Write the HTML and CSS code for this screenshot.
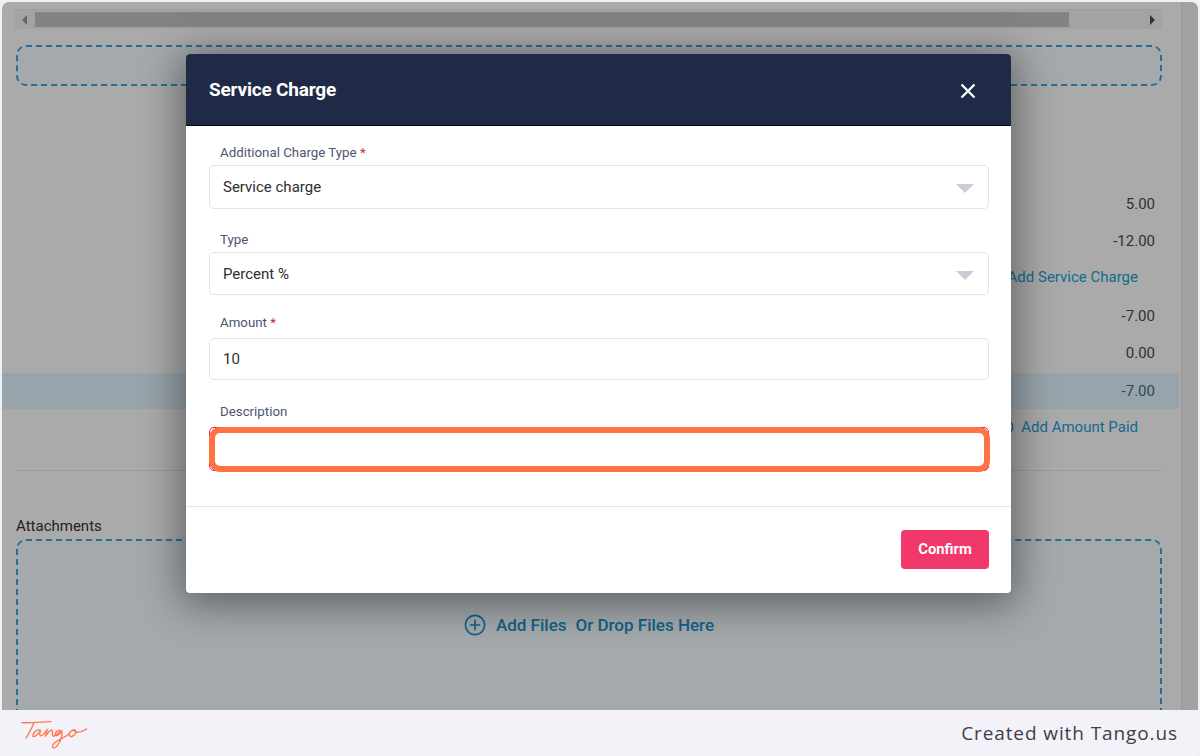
FILE: index.html
```html
<!DOCTYPE html>
<html lang="en">
<head>
<meta charset="utf-8">
<title>Service Charge</title>
<link rel="stylesheet" href="styles.css">
</head>
<body>
<div class="screen">
  <div class="stage">
    <main class="page">
      <div class="scrollbar">
        <span class="arrow arrow-left"></span>
        <span class="thumb"></span>
        <span class="arrow arrow-right"></span>
      </div>
      <div class="drop drop-top"></div>
      <div class="rows">
        <div class="row">5.00</div>
        <div class="row">-12.00</div>
        <div class="row link link-up">Add Service Charge</div>
        <div class="row row-down">-7.00</div>
        <div class="row row-down row-tail">0.00</div>
        <div class="row band">-7.00</div>
        <div class="row link link-up">
          <svg class="small-plus" viewBox="0 0 16 16"><circle cx="8" cy="8" r="6.8"/></svg>
          Add Amount Paid
        </div>
      </div>
      <hr class="rule">
      <div class="attach-label">Attachments</div>
      <div class="drop drop-files">
        <svg class="plus" viewBox="0 0 22 22"><circle cx="11" cy="11" r="9.6"/><path d="M11 5.8v10.4M5.8 11h10.4"/></svg>
        <span>Add Files</span>
        <span class="or">Or Drop Files Here</span>
      </div>
    </main>
    <aside class="side"></aside>

    <section class="modal">
      <header class="modal-head">
        <h2>Service Charge</h2>
        <svg class="close" viewBox="0 0 16 16"><path d="M1.5 1.5l13 13M14.500 1.500l-13 13"/></svg>
      </header>
      <div class="modal-body">
        <div class="field f1">
          <label>Additional Charge Type <b>*</b></label>
          <div class="box select">Service charge<span class="caret"></span></div>
        </div>
        <div class="field f2">
          <label>Type</label>
          <div class="box select">Percent %<span class="caret"></span></div>
        </div>
        <div class="field f3">
          <label>Amount <b>*</b></label>
          <div class="box input">10</div>
        </div>
        <div class="field f4">
          <label>Description</label>
          <div class="box desc"><span class="highlight"></span></div>
        </div>
      </div>
      <footer class="modal-foot">
        <button class="confirm">Confirm</button>
      </footer>
    </section>
  </div>
  <footer class="brand">
    <svg class="logo" viewBox="0 0 66 28.500" aria-label="Tango logo">
      <path d="M1.500 3.500C7 3.900 14 3.300 29 2.500M13 3.500C11 9 8 14 5.500 18"/>
      <path d="M19 10.500C16 9.500 12.500 12.500 12 15.500C11.700 18 15 17 19.500 10.500C18.500 13 18 15.500 19.500 16C21.500 16.500 23 12.500 25.500 10.500C25 12 24 14.500 24 16C26 13.500 28 10.500 30 10.500C31.500 11 29.500 14.500 31 16C33 17 36 13.500 38.500 11.500C36.500 10 33.500 12 33 14.500C33 17 37 15.500 39.500 11.500C40 15 38.500 21 35 25.500C32.500 28.500 29.500 28 31 24.500C33 21 40 19 46 14.500C47.500 11.500 50 10 52.500 10.500C50 10 46.500 12 46.500 15C47 18 52 16.500 53 12.500C53.200 11 52 10.500 51 11C53 13.500 57 13 63 9.500"/>
    </svg>
    <div class="credit">Created with Tango.us</div>
  </footer>
</div>
</body>
</html>
```

FILE: styles.css
```css
* { box-sizing: border-box; }
html, body { margin: 0; padding: 0; }
body {
  width: 1200px;
  height: 756px;
  overflow: hidden;
  background: #f1f1f3;
  font-family: Roboto, "Liberation Sans", sans-serif;
}
.screen { display: flex; flex-direction: column; height: 756px; padding-top: 2px; }
.stage {
  position: relative;
  display: flex;
  height: 708px;
  margin: 0 2px;
  border-radius: 7px 7px 0 0;
  overflow: hidden;
  background: #aaaaaa;
}
.page { width: 1179px; flex: none; padding-top: 7px; }
.side { flex: 1; background: #a0a1a2; border-left: 1px solid #9a9a9a; }

.scrollbar {
  display: flex;
  align-items: center;
  height: 20px;
  margin: 0 19px 0 13px;
  padding: 3px 0;
  background: #a3a3a3;
  border-top: 1px solid #9f9f9f;
}
.thumb { display: block; width: 1034px; height: 15px; background: #838383; }
.arrow { display: block; width: 0; height: 0; border-style: solid; border-color: transparent; }
.arrow-left { border-width: 5px 5px 5px 0; border-right-color: #666; margin: 0 8px 0 7px; }
.arrow-right { border-width: 5px 0 5px 5px; border-left-color: #333; margin-left: 81px; }

.drop {
  margin: 0 19px 0 14px;
  border: 2px dashed #2a6f93;
  border-radius: 10px;
  background: #a4a9ac;
}
.drop-top { height: 41px; margin-top: 16px; }

.rows { margin-top: 99px; }
.row {
  display: flex;
  align-items: center;
  justify-content: flex-end;
  height: 37px;
  padding-right: 26px;
  font-size: 15px;
  color: #303234;
}
.row-down { padding-top: 2px; }
.row-tail { margin-bottom: 3px; }
.band { height: 36px; margin-right: 2px; padding-right: 24px; background: #98a4ab; color: #254a5e; }
.link { color: #116a91; padding-right: 43px; }
.link-up { padding-bottom: 2px; }
.small-plus { width: 16px; height: 16px; margin-right: 7px; fill: none; stroke: #116a91; stroke-width: 1.500; }

.rule { height: 1px; margin: 24px 19px 0 14px; border: 0; background: #9a9a9a; }
.attach-label { margin: 46px 0 0 14px; height: 22px; font-size: 15px; line-height: 18px; color: #222; }
.drop-files {
  display: flex;
  align-items: center;
  justify-content: center;
  height: 190px;
  padding: 0 0 18px 0;
  font-size: 17px;
  font-weight: 500;
  color: #0f6288;
}
.plus { width: 22px; height: 22px; margin-right: 10px; fill: none; stroke: #0f6288; stroke-width: 1.700; }
.or { margin-left: 9px; }

.modal {
  position: absolute;
  left: 184px;
  top: 52px;
  width: 825px;
  height: 539px;
  display: flex;
  flex-direction: column;
  background: #fff;
  border-radius: 4px;
  box-shadow: 0 6px 40px 6px rgba(0, 0, 0, 0.42);
}
.modal-head {
  flex: none;
  display: flex;
  align-items: center;
  justify-content: space-between;
  height: 72px;
  padding: 0 35px 0 23px;
  background: #1f2a47;
  border-radius: 4px 4px 0 0;
  border-bottom: 1px solid #05070d;
  color: #fff;
}
.modal-head h2 { margin: 0 0 1px; font-size: 19px; font-weight: 700; letter-spacing: -0.200px; }
.close { width: 16px; height: 16px; margin-top: 3px; fill: none; stroke: #fff; stroke-width: 2.300; }

.modal-body { flex: none; height: 380px; padding: 0 22px 0 23px; }
.field label {
  display: block;
  height: 16px;
  padding-left: 11px;
  font-size: 13.300px;
  line-height: 16px;
  color: #4c5472;
}
.field label b { color: #d9233f; font-weight: 400; }
.f1 { padding-top: 19px; }
.f2 { padding-top: 23px; }
.f3 { padding-top: 20px; }
.f4 { padding-top: 24px; }
.f1 label, .f2 label { margin-bottom: 4px; }
.f3 label { margin-bottom: 7px; }
.f4 label { margin-bottom: 7px; }
.box {
  position: relative;
  display: flex;
  align-items: center;
  width: 780px;
  padding-left: 13px;
  border: 1px solid #e2e3e6;
  border-radius: 5px;
  font-size: 15px;
  color: #2e2e2e;
  background: #fff;
}
.select { height: 44px; }
.input { height: 42px; }
.f2 .select { height: 43px; padding-top: 1px; }
.caret {
  position: absolute;
  right: 14px;
  top: 18px;
  width: 0;
  height: 0;
  border-style: solid;
  border-width: 9px 9px 0;
  border-color: #c9ced6 transparent transparent;
}
.desc { height: 44px; border: 1px solid #e8175d; }
.highlight {
  position: absolute;
  left: -1px;
  top: -1px;
  width: 781px;
  height: 45px;
  border: 6px solid #ff7342;
  border-radius: 11px;
}

.modal-foot {
  flex: none;
  display: flex;
  justify-content: flex-end;
  align-items: flex-start;
  height: 87px;
  padding: 23px 22px 0 0;
  border-top: 1px solid #e4e4ea;
}
.confirm {
  width: 88px;
  height: 39px;
  padding: 0 0 2px;
  border: 0;
  border-radius: 4px;
  background: #f0386b;
  color: #fff;
  font-family: Roboto, "Liberation Sans", sans-serif;
  font-size: 14.800px;
  font-weight: 700;
}

.brand {
  flex: none;
  display: flex;
  align-items: center;
  justify-content: space-between;
  height: 46px;
  padding: 0 22px 0 20px;
  background: #f3f2f8;
  border-radius: 0 0 8px 8px;
}
.logo { width: 70px; height: 30px; margin-top: 2px; fill: none; stroke: #ff7a50; stroke-width: 1.300; stroke-linecap: round; }
.credit { font-family: "Open Sans", sans-serif; font-size: 19px; letter-spacing: 0.900px; color: #3e3e48; }
```
